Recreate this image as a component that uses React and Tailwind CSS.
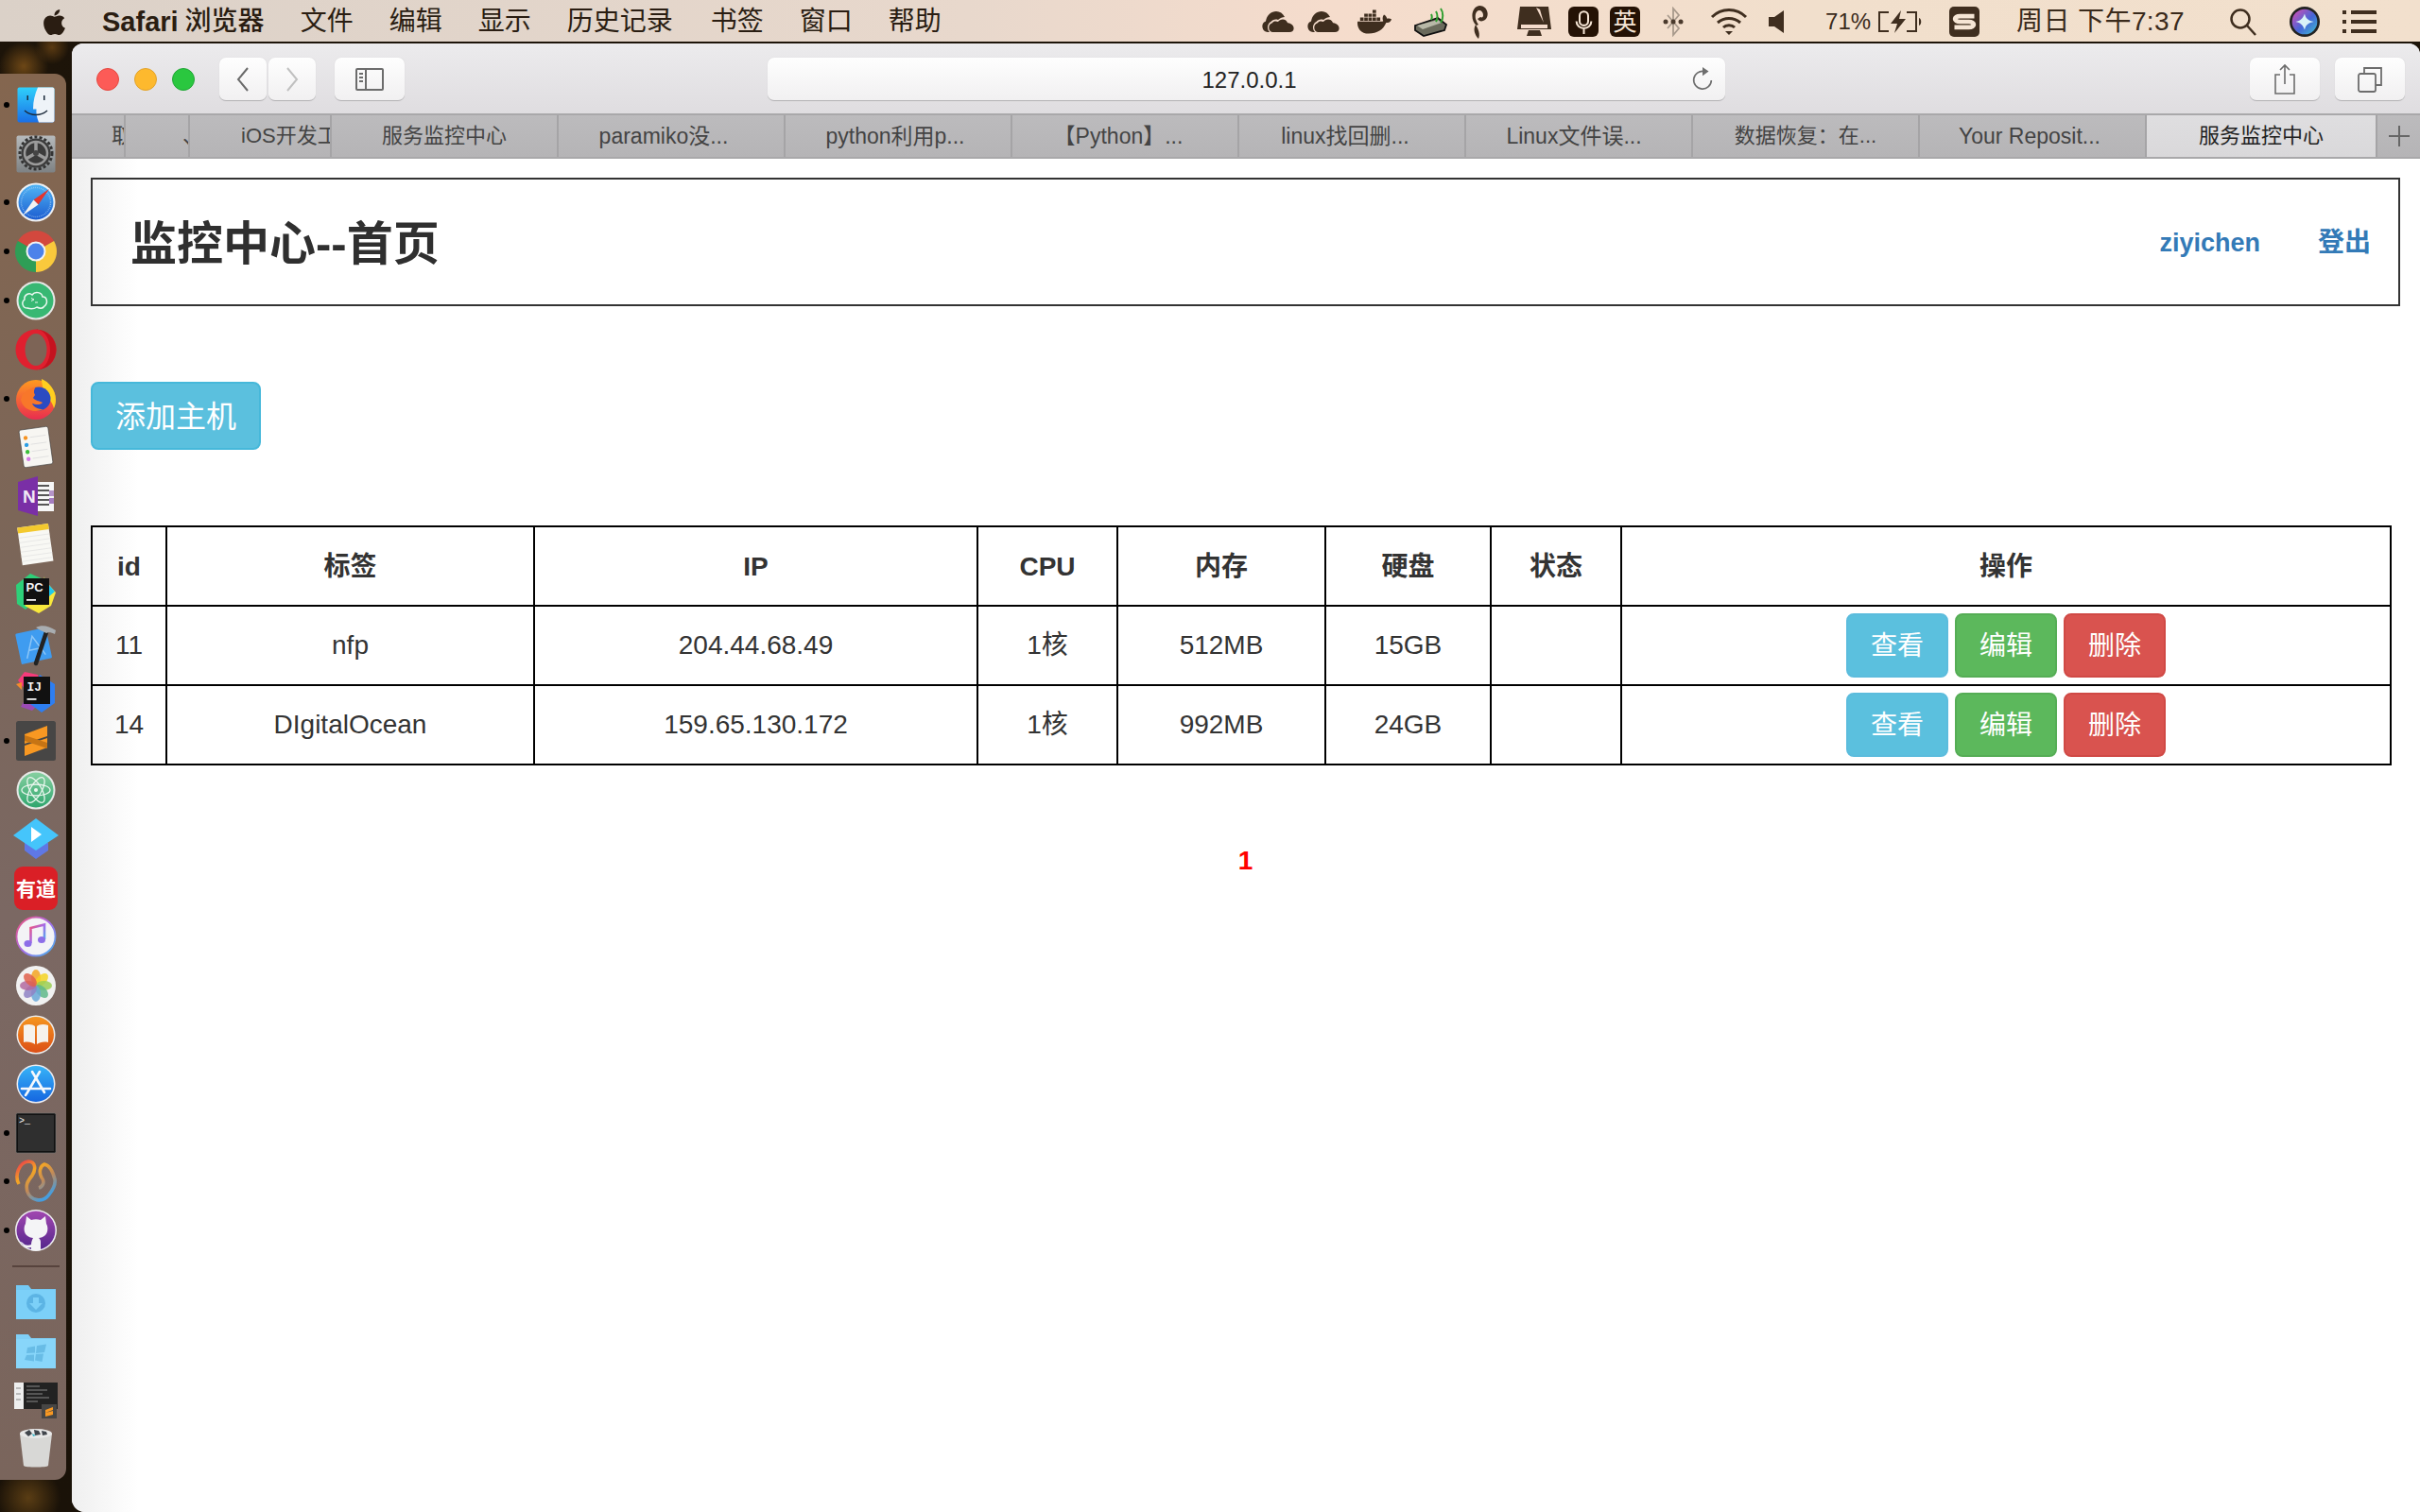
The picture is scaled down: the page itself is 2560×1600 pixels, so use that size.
import React from "react";
import { FaApple, FaDocker } from "react-icons/fa";

const Dock = ({ dot, children, cls = "h-[51.8px]" }) => (
  <div className={`relative flex w-[52px] items-center justify-center ${cls}`}>
    {dot && <span className="absolute left-[-8px] top-1/2 h-[6px] w-[6px] -translate-y-1/2 rounded-full bg-black" />}
    <svg viewBox="0 0 48 48" className="h-[48px] w-[48px]">{children}</svg>
  </div>
);

const G = ({ id, a, b }) => (
  <defs>
    <linearGradient id={id} x1="0" y1="0" x2="0" y2="1">
      <stop offset="0" stopColor={a} />
      <stop offset="1" stopColor={b} />
    </linearGradient>
  </defs>
);

function DockBar() {
  return (
    <aside className="mt-[34px] flex h-[1488px] w-[70px] flex-col rounded-r-[12px] bg-[linear-gradient(180deg,#84664f_0%,#7b6659_35%,#7b6863_60%,#7a655c_100%)] pl-[12px] pt-[7px]">
      <Dock dot>
        <G id="fa" a="#2fd0fb" b="#1a6fe6" />
        <rect x="4.5" y="5.5" width="39" height="37" rx="2" fill="url(#fa)" />
        <path d="M26 5.5H41.5a2 2 0 0 1 2 2v33a2 2 0 0 1-2 2H27c-2-5-3-10-2.500-14H21c0-9 2-16 5-23Z" fill="#eef3f8" />
        <rect x="14.500" y="14" width="1.500" height="5" fill="#1b2a3a" />
        <rect x="32" y="14" width="1.500" height="5" fill="#1b2a3a" />
        <path d="M12 30c7 6 17 6 24 0" stroke="#1b2a3a" strokeWidth="1.500" fill="none" />
      </Dock>
      <Dock>
        <G id="fb" a="#b6babc" b="#7e8284" />
        <rect x="3.500" y="4.500" width="41" height="39" rx="2" fill="url(#fb)" />
        <circle cx="24" cy="23" r="17" fill="none" stroke="#333" strokeWidth="3" strokeDasharray="3 2.200" />
        <circle cx="24" cy="23" r="15.500" fill="#3b3b3b" />
        <circle cx="24" cy="23" r="12" fill="none" stroke="#9b9b9b" strokeWidth="2.500" />
        <path d="M24 23V11M24 23 13.500 29M24 23 34.500 29" stroke="#9b9b9b" strokeWidth="3.500" />
        <circle cx="24" cy="23" r="3" fill="#444" />
      </Dock>
      <Dock dot>
        <G id="fc" a="#50b4f4" b="#1b5cd0" />
        <circle cx="24" cy="24" r="20.500" fill="#eef0f2" />
        <circle cx="24" cy="24" r="18.500" fill="url(#fc)" />
        <circle cx="24" cy="24" r="15.500" fill="none" stroke="#a8d0f4" strokeWidth="1.500" strokeDasharray="0.600 1.400" />
        <path d="M38 10 21.500 21.500l5 5Z" fill="#e5352c" />
        <path d="M10 38 21.500 21.500l5 5Z" fill="#f2f2f2" />
      </Dock>
      <Dock dot>
        <path d="M24 24 4.950 13A22 22 0 0 1 43.050 13Z" fill="#d3483e" />
        <path d="M24 24 43.050 13A22 22 0 0 1 24 46Z" fill="#f9c93c" />
        <path d="M24 24 24 46A22 22 0 0 1 4.950 13Z" fill="#2f9e56" />
        <circle cx="24" cy="24" r="10.500" fill="#f4f4f4" />
        <circle cx="24" cy="24" r="8.500" fill="#4c82ea" />
      </Dock>
      <Dock dot>
        <circle cx="24" cy="24" r="20.500" fill="#e6e8e6" />
        <circle cx="24" cy="24" r="18.500" fill="#38b873" />
        <path d="M15 32c-5 0-7-6-3-9-1-5 5-8 8-5 3-4 10-3 11 2 5 0 6 7 2 10-2 3-6 2-8 1-3 2-7 2-10 1Z" fill="none" stroke="#ecf8f1" strokeWidth="1.500" />
        <path d="M19 21.500l3 1.500-3 1.500M23 26h3" stroke="#ecf8f1" strokeWidth="1" fill="none" />
      </Dock>
      <Dock>
        <circle cx="24" cy="24" r="21.500" fill="#e0202f" />
        <path d="M24 2.500a21.500 21.500 0 0 1 0 43c9 0 15-10 15-21.500S33 2.500 24 2.500Z" fill="#c4131f" />
        <ellipse cx="24" cy="24" rx="11.500" ry="17" fill="#7d6456" />
      </Dock>
      <Dock dot>
        <G id="ff" a="#ff9a1f" b="#e92d4f" />
        <circle cx="24" cy="25" r="21" fill="url(#ff)" />
        <path d="M30 3c8 3 15 12 15 22 0 4-1 7-2 9-2-9-9-12-11-19-1-4-2-8-2-12Z" fill="#ffcf1f" />
        <circle cx="27" cy="24" r="12.500" fill="#2b4bc2" />
        <path d="M8 25c2 10 13 15 24 10-6 0-10-2-12-6 3 1 9 2 11-1-4-2-8-2-10-5l2-3c-2-3-1-6 1-9-6 2-10 4-12 7-2 1-3 3-4 7Z" fill="#f8772a" />
      </Dock>
      <Dock>
        <g transform="rotate(-8 24 24)">
          <rect x="8.500" y="4" width="31" height="40" rx="2" fill="#f7f6f2" stroke="#3a3a3a" strokeWidth="0.600" />
          <circle cx="14.500" cy="13" r="2.200" fill="#f59322" />
          <circle cx="14.500" cy="20.500" r="2.200" fill="#2a9ee5" />
          <circle cx="14.500" cy="28" r="2.200" fill="#3bbf3b" />
          <circle cx="14.500" cy="35.500" r="2.200" fill="#d47ae6" />
          <path d="M19 13h17M19 20.500h17M19 28h17M19 35.500h17" stroke="#ddd" strokeWidth="0.800" />
        </g>
      </Dock>
      <Dock>
        <rect x="26" y="9" width="17" height="31" fill="#f6f6f6" />
        <path d="M26 13h12M26 18h12M26 23h12M26 28h12M26 33h12" stroke="#222" strokeWidth="1.500" />
        <rect x="38" y="18" width="5" height="6" fill="#b594c8" />
        <rect x="38" y="26" width="5" height="6" fill="#a57dc0" />
        <path d="M5 9 26 3V45L5 39Z" fill="#7a2fa6" />
        <text x="10" y="31" fontSize="19" fontWeight="700" fill="#f2e8f6" fontFamily="Liberation Sans">N</text>
      </Dock>
      <Dock>
        <g transform="rotate(-8 24 24)">
          <rect x="7" y="3" width="33" height="40" fill="#f8f8f4" />
          <rect x="7" y="3" width="33" height="6" fill="#f3c92e" />
          <path d="M7 14h33M7 19h33M7 24h33M7 29h33M7 34h33M7 39h33" stroke="#ddd" strokeWidth="0.600" />
        </g>
      </Dock>
      <Dock>
        <path d="M3 14 18 2l14 6 3 12-22 20-9-6Z" fill="#2ed079" />
        <path d="M32 8l1-3 2 15Z" fill="#b9d34a" />
        <path d="M38 14l7 8-5 14L27 44 12 36Z" fill="#f8e83c" />
        <path d="M36 12l8 9-6 5Z" fill="#1ec8ee" />
        <rect x="11" y="7" width="27" height="28" fill="#111" />
        <text x="13.500" y="21" fontSize="13" fontWeight="700" fill="#f5f5f5" fontFamily="Liberation Sans">PC</text>
        <rect x="14" y="29" width="10" height="1.800" fill="#f5f5f5" />
      </Dock>
      <Dock>
        <g transform="rotate(-12 22 26)">
          <rect x="5" y="10" width="33" height="33" rx="1.500" fill="#3f9cf0" />
          <path d="M12 38 22 16l10 22M16 30h12" stroke="#8cc6f7" strokeWidth="1.500" fill="none" />
        </g>
        <path d="M36 9 24 45" stroke="#222" strokeWidth="4.500" strokeLinecap="round" />
        <path d="M24 7c6-3 13-2 21 3l-1 4c-4-2-7-2-9-1-3-2-7-3-11-6Z" fill="#a9adb0" />
      </Dock>
      <Dock>
        <path d="M5 12 12 3l14 3 4 16-14 4Z" fill="#f53b7a" />
        <path d="M9 22 3 16l6-2Z" fill="#f58b2c" />
        <path d="M16 26 8 40l12 4 8-8Z" fill="#9c4bb5" />
        <path d="M28 6l16 10v20L30 46 14 34Z" fill="#2e7ef0" />
        <rect x="11" y="8" width="28" height="29" fill="#111" />
        <text x="14.500" y="22.500" fontSize="13" fontWeight="700" fill="#f5f5f5" fontFamily="Liberation Mono">IJ</text>
        <rect x="14.500" y="31" width="10" height="1.800" fill="#f5f5f5" />
      </Dock>
      <Dock dot>
        <rect x="3" y="3" width="42" height="42" rx="2.500" fill="#474645" />
        <path d="M36 8v11L12 27V17Z" fill="#f89822" />
        <path d="M12 29 36 21v10L12 40Z" fill="#f89822" />
        <path d="M12 18l24 8v6l-24-8Z" fill="#c67414" />
      </Dock>
      <Dock>
        <G id="fg" a="#86cfa0" b="#2fa66e" />
        <circle cx="24" cy="24" r="20.500" fill="#e6e8e6" />
        <circle cx="24" cy="24" r="18.500" fill="url(#fg)" />
        <g fill="none" stroke="#eaf6ee" strokeWidth="1.300">
          <ellipse cx="24" cy="24" rx="15" ry="6" />
          <ellipse cx="24" cy="24" rx="15" ry="6" transform="rotate(60 24 24)" />
          <ellipse cx="24" cy="24" rx="15" ry="6" transform="rotate(120 24 24)" />
        </g>
        <circle cx="24" cy="24" r="2" fill="#eaf6ee" />
      </Dock>
      <Dock>
        <path d="M12 28v8l12 9 13-9v-8Z" fill="#5f78e5" />
        <path d="M24 2 48 20 24 36 0 20Z" fill="#45c5fb" />
        <path d="M19 11 30 19 19 27Z" fill="#fff" />
      </Dock>
      <Dock>
        <rect x="1" y="1" width="46" height="46" rx="9" fill="#da1f26" />
        <text x="24" y="32" textAnchor="middle" fontSize="21" fontWeight="700" fill="#fff" fontFamily="Noto Sans CJK SC">有道</text>
      </Dock>
      <Dock>
        <defs>
          <linearGradient id="fm" x1="0" y1="0" x2="1" y2="1">
            <stop offset="0" stopColor="#f0527a" />
            <stop offset="0.500" stopColor="#a66be8" />
            <stop offset="1" stopColor="#3fb8ef" />
          </linearGradient>
        </defs>
        <circle cx="24" cy="24" r="20.500" fill="#f3f3f6" stroke="url(#fm)" strokeWidth="1.800" />
        <path d="M18.500 31V15L33 11.500V27" stroke="url(#fm)" strokeWidth="2.600" fill="none" />
        <ellipse cx="15.500" cy="31.500" rx="4" ry="3.500" fill="#8d6ee8" />
        <ellipse cx="30" cy="27.500" rx="4" ry="3.500" fill="#8d6ee8" />
      </Dock>
      <Dock>
        <circle cx="24" cy="24" r="21" fill="#f1f1f1" />
        {[
          ["#f5a623", 0], ["#f5d423", 45], ["#9bcf53", 90], ["#5fb98a", 135],
          ["#6aa8d8", 180], ["#8f82c4", 225], ["#b36aa0", 270], ["#e0604c", 315],
        ].map(([c, r]) => (
          <ellipse key={r} cx="24" cy="15.500" rx="5" ry="8.500" fill={c} opacity="0.850" transform={`rotate(${r} 24 24)`} />
        ))}
      </Dock>
      <Dock>
        <G id="fo" a="#f5951f" b="#dc4f16" />
        <circle cx="24" cy="24" r="20.500" fill="#ececec" />
        <circle cx="24" cy="24" r="19" fill="url(#fo)" />
        <path d="M11 14c5-2 10-1 12 1v19c-3-2-7-3-12-2ZM37 14c-5-2-10-1-12 1v19c3-2 7-3 12-2Z" fill="#f6f2ec" />
      </Dock>
      <Dock>
        <G id="fp" a="#37b4f8" b="#1566e0" />
        <circle cx="24" cy="24" r="20.500" fill="#ececf0" />
        <circle cx="24" cy="24" r="19" fill="url(#fp)" />
        <path d="M28 11 15 33M20 11l13 22M9 29h30M15 33l-2 3" stroke="#f5f8fc" strokeWidth="2.600" strokeLinecap="round" fill="none" />
      </Dock>
      <Dock dot>
        <rect x="3" y="3" width="42" height="42" rx="1.500" fill="#111" stroke="#777" strokeWidth="0.600" />
        <rect x="5" y="5" width="38" height="38" fill="#2f2f2f" />
        <text x="6" y="14" fontSize="10" fill="#f4f4f4" fontFamily="Liberation Mono">&gt;_</text>
      </Dock>
      <Dock dot>
        <defs>
          <linearGradient id="fn" x1="0" y1="0" x2="0.700" y2="1">
            <stop offset="0" stopColor="#e8344f" />
            <stop offset="0.350" stopColor="#f6a623" />
            <stop offset="0.650" stopColor="#c08a5a" />
            <stop offset="1" stopColor="#3f9fe6" />
          </linearGradient>
        </defs>
        <path d="M6 27C1 18 6 4 16 3c8 0 8 9 4 15-5 6-7 10-5 17 3 9 16 13 23 3 4-5 7-10 6-16-2-8-6-15-11-16-5 2-6 9-3 14 4 5 1 10-3 11" fill="none" stroke="url(#fn)" strokeWidth="3.600" />
      </Dock>
      <Dock dot>
        <G id="fq" a="#a147b0" b="#55278c" />
        <circle cx="24" cy="24" r="22" fill="#efeff2" />
        <circle cx="24" cy="24" r="20.500" fill="url(#fq)" />
        <path d="M14 9l5 4c3-1 7-1 10 0l5-4 1 8c2 3 2 9-1 12-2 2-5 3-7 3 1 1 2 2 2 4v9a21 21 0 0 1-10 0v-3c-4 1-7 0-8-2-1-2-3-3-4-4 2 0 3 1 5 3 2 1 5 1 7 0 0-3 1-5 2-7-2 0-5-1-7-3-3-3-3-9-1-12Z" fill="#f4f4f6" />
      </Dock>
      <div className="flex h-[23px] w-[52px] items-center justify-center">
        <div className="h-[2px] w-[50px] bg-[#57433d]" />
      </div>
      <Dock>
        <path d="M3 7h13l3 4h26v32H3Z" fill="#74c9f4" />
        <rect x="3" y="12" width="42" height="31" fill="#7cd0f8" />
        <circle cx="24" cy="26" r="10" fill="#5cb4e4" />
        <path d="M21 20h6v6h4l-7 7-7-7h4Z" fill="#7cd0f8" />
      </Dock>
      <Dock>
        <path d="M3 7h13l3 4h26v32H3Z" fill="#80cff6" />
        <rect x="3" y="12" width="42" height="31" fill="#88d6fa" />
        <path d="M15 21l8-1.500v7l-9 .5ZM25 19l10-1.500-2 8.500-9 1ZM14 29l8-.5v7L12 34ZM24 28l8-.5-1.500 8.500-7.500-1.500Z" fill="#68bce6" />
      </Dock>
      <Dock>
        <rect x="1" y="6" width="46" height="28" fill="#eee" />
        <rect x="11" y="6" width="36" height="28" fill="#222" />
        <path d="M14 10h14M14 14h22M14 18h17M14 22h24M14 26h12M3 12h5M3 18h5M3 24h5" stroke="#888" strokeWidth="1" />
        <rect x="30" y="29" width="16" height="15" fill="#474645" />
        <path d="M42 32v3l-8 3v-3ZM34 38l8-2v4l-8 2Z" fill="#f89822" />
      </Dock>
      <Dock>
        <path d="M7 9h34l-4 34c-1 2-25 2-26 0Z" fill="#d8d8d6" />
        <ellipse cx="24" cy="9" rx="17" ry="5" fill="#e8e8e8" />
        <path d="M12 8l5-3 3 4-4 3ZM22 5l5 1 2 4-6 1ZM30 6l5 1 1 3-5 1Z" fill="#40454c" />
        <path d="M20 9l4 2-3 1Z" fill="#38b5c7" />
      </Dock>
    </aside>
  );
}

const Cloud = () => (
  <svg viewBox="0 0 36 24" className="h-[24px] w-[36px]" fill="#3f2e1f">
    <path d="M7 23a6 6 0 0 1-2-11.500C6 5 11 1 16 1c4 0 7 2 9 6-2 0-5 1-7 3-3-1-6 0-7.500 2C8 13 7 16 7 18c0 2 1 4 2 5Z" />
    <path d="M12 23a5 5 0 0 1-.5-9.500C13 11 16 11 18 12c2-3 8-4 10 1 0 .5 1 0 3 1 5 2 5 9-1 9Z" />
  </svg>
);

function Status() {
  return (
    <div className="flex items-center text-[#3a2a1b]">
      <Cloud />
      <span className="ml-[12px] flex"><Cloud /></span>
      <FaDocker className="ml-[18px] text-[36px] text-[#3f2e1f]" />
      <svg viewBox="0 0 36 32" className="ml-[24px] h-[32px] w-[36px]">
        <path d="M1 20 25 12l9 7-2 6-22 6-9-6Z" fill="#6a6a5c" stroke="#111" strokeWidth="1.800" />
        <path d="M3 20l22-6 4 3-20 7Z" fill="#b8b8a8" />
        <path d="M18 8c1 2 1 4 0 6M23 5c2 3 2 8 0 11M28 2c3 4 3 11 0 15" stroke="#2f9e2f" strokeWidth="2" fill="none" />
      </svg>
      <svg viewBox="0 0 18 36" className="ml-[24px] h-[36px] w-[18px]" fill="#3f2e1f">
        <path d="M6 22C-1 17 0 2 9 1c9 0 11 11 6 15-3 2-6 2-8-1l3-2c2 1 3 0 3-2 0-3-2-5-4-5-3 0-5 4-4 9 1 3 2 5 3 6Z" />
        <path d="M5 21c-3 5-1 11 3 15 2-5 0-10-3-15Z" />
      </svg>
      <svg viewBox="0 0 36 34" className="ml-[31px] h-[34px] w-[36px]" fill="#3f2e1f">
        <path d="M3 1h30l3 24H0Z" />
        <path d="M4 20h28v4H4Z" fill="#f5dccc" />
        <path d="M20 2l8 16-4-14Z" fill="#f5dccc" />
        <path d="M12 26h12l2 6H10Z" />
      </svg>
      <span className="ml-[18px] flex h-[32px] w-[32px] items-center justify-center rounded-[6px] bg-[#241205]">
        <svg viewBox="0 0 24 24" className="h-[27px] w-[27px]" fill="none" stroke="#f5e5d5" strokeWidth="1.800">
          <rect x="8" y="2" width="8" height="13" rx="4" />
          <path d="M5 11c0 9 14 9 14 0M12 18v5" />
        </svg>
      </span>
      <span className="ml-[12px] flex h-[32px] w-[32px] items-center justify-center rounded-[6px] bg-[#241205] text-[25px] leading-none text-[#f5e5d5]">英</span>
      <svg viewBox="0 0 22 32" className="ml-[24px] h-[32px] w-[22px]" fill="none" stroke="#a89a8c" strokeWidth="1.800">
        <path d="M5 9l12 14-6 7V2l6 7L5 23" />
        <circle cx="3" cy="16" r="2.500" fill="#4a3a2c" stroke="none" />
        <circle cx="11" cy="16" r="2.500" fill="#4a3a2c" stroke="none" />
        <circle cx="19" cy="16" r="2.500" fill="#4a3a2c" stroke="none" />
      </svg>
      <svg viewBox="0 0 40 30" className="ml-[28px] h-[30px] w-[40px]" fill="none" stroke="#3f2e1f" strokeWidth="3">
        <path d="M2 10c10-10 26-10 36 0M8 16c7-6 17-6 24 0M14 21c3-3 9-3 12 0" />
        <path d="M20 29l-4-4h8Z" fill="#3f2e1f" stroke="none" />
      </svg>
      <svg viewBox="0 0 16 24" className="ml-[22px] h-[24px] w-[16px]" fill="#3f2e1f">
        <path d="M0 7h6l10-7v24L6 17H0Z" />
      </svg>
      <span className="ml-[44px] text-[24px] leading-none">71%</span>
      <svg viewBox="0 0 46 24" className="ml-[8px] h-[24px] w-[46px]" fill="none" stroke="#3f2e1f" strokeWidth="2">
        <path d="M11 2H1v20h10M30 2h10v20H30" />
        <path d="M24 0 13 14h7l-3 10 12-15h-7Z" fill="#3f2e1f" stroke="none" />
        <path d="M43 8c3 1 3 7 0 8Z" fill="#3f2e1f" stroke="none" />
      </svg>
      <span className="ml-[29px] flex h-[32px] w-[32px] items-center justify-center rounded-[5px] bg-[#3f2e1f]">
        <svg viewBox="0 0 24 24" className="h-[28px] w-[28px]" fill="none" stroke="#f5e5d5" strokeWidth="4">
          <path d="M21 7H8c-6 0-6 5 0 5h8c6 0 6 5 0 5H3" />
        </svg>
      </span>
      <span className="ml-[39px] whitespace-nowrap text-[28px] leading-none tracking-[0.4px]">周日 下午7:37</span>
      <svg viewBox="0 0 30 30" className="ml-[47px] h-[30px] w-[30px]" fill="none" stroke="#3f2e1f" strokeWidth="2.500">
        <circle cx="12" cy="12" r="9.500" />
        <path d="M19 19l9 10" />
      </svg>
      <svg viewBox="0 0 30 30" className="ml-[34px] h-[32px] w-[32px]">
        <defs>
          <linearGradient id="sr" x1="0" y1="0" x2="1" y2="1">
            <stop offset="0" stopColor="#e14bb0" />
            <stop offset="0.550" stopColor="#4466d8" />
            <stop offset="1" stopColor="#3fc1d0" />
          </linearGradient>
        </defs>
        <circle cx="15" cy="15" r="15" fill="#222" />
        <circle cx="15" cy="15" r="12.500" fill="url(#sr)" />
        <path d="M6 15c5-1 7-3 9-8 1 5 4 7 9 8-5 1-8 3-9 8-2-5-4-7-9-8Z" fill="#d8f2f8" />
      </svg>
      <svg viewBox="0 0 36 30" className="ml-[24px] h-[30px] w-[36px]" fill="#3f2e1f">
        <path d="M0 3h4v4H0ZM9 3h27v4H9ZM0 13h4v4H0ZM9 13h27v4H9ZM0 23h4v4H0ZM9 23h27v4H9Z" />
      </svg>
    </div>
  );
}

const tabs = [
  ["w-[57px] pl-[42px]", "取"],
  ["w-[68px] pl-[60px]", "、"],
  ["w-[150px] pl-[54px]", "iOS开发工具"],
  ["w-[240px] justify-center", "服务监控中心"],
  ["w-[240px] justify-center pr-[16px] text-[23px]", "paramiko没..."],
  ["w-[240px] justify-center pr-[6px] text-[23px]", "python利用p..."],
  ["w-[240px] justify-center pr-[14px] text-[23px]", "【Python】..."],
  ["w-[240px] justify-center pr-[14px] text-[23px]", "linux找回删..."],
  ["w-[240px] justify-center pr-[10px] text-[23px]", "Linux文件误..."],
  ["w-[240px] justify-center", "数据恢复：在..."],
  ["w-[240px] justify-center pr-[6px] text-[23px]", "Your Reposit..."],
];

const ToolBtn = ({ cls, children }) => (
  <div className={`flex h-[46px] items-center justify-center rounded-[7px] border-b border-b-[#b5b4b6] bg-[linear-gradient(180deg,#fefefe,#f1f0f1)] shadow-[0_0_1px_#c8c8c8] ${cls}`}>
    {children}
  </div>
);

const ActBtn = ({ cls, children }) => (
  <button className={`h-[68px] w-[108px] rounded-[8px] border-2 pt-[2px] text-[28px] text-white ${cls}`}>{children}</button>
);

const rows = [
  ["11", "nfp", "204.44.68.49", "1核", "512MB", "15GB"],
  ["14", "DIgitalOcean", "159.65.130.172", "1核", "992MB", "24GB"],
];

const cell = "border-2 border-black text-center align-middle";

export default function App() {
  return (
    <div className="flex h-[1600px] w-[2560px] flex-col overflow-hidden bg-[radial-gradient(circle_at_25px_70px,#6d4716_0,transparent_26px),radial-gradient(circle_at_55px_50px,#5a3a12_0,transparent_18px),radial-gradient(circle_at_30px_1585px,#5a3d14_0,transparent_34px),linear-gradient(180deg,#1d1409,#1a1208)] text-[#333] [font-family:'Liberation_Sans','Noto_Sans_CJK_SC',sans-serif]">
      <header className="flex h-[44px] shrink-0 items-center justify-between bg-[linear-gradient(90deg,#dbd1c8_0%,#e8d8cc_40%,#f5dccc_55%,#f1dfcc_75%,#f2e0cd_100%)] pl-[42px] pr-[46px] pt-[2px]">
        <div className="flex items-center text-[28px] leading-none text-[#2a1d12]">
          <FaApple className="text-[31px]" />
          <span className="ml-[35px] text-[29px] font-bold">Safari</span>
          <span className="ml-[7px] font-medium">浏览器</span>
          <span className="ml-[38px]">文件</span>
          <span className="ml-[38px]">编辑</span>
          <span className="ml-[38px]">显示</span>
          <span className="ml-[38px]">历史记录</span>
          <span className="ml-[40px]">书签</span>
          <span className="ml-[38px]">窗口</span>
          <span className="ml-[38px]">帮助</span>
        </div>
        <Status />
      </header>
      <div className="flex min-h-0 flex-1">
        <div className="w-[76px] shrink-0">
          <DockBar />
        </div>
        <main className="mt-[2px] flex min-w-0 flex-1 flex-col overflow-hidden rounded-t-[12px] rounded-bl-[14px] bg-white">
          <div className="flex h-[74px] shrink-0 items-center bg-[linear-gradient(180deg,#ecebed,#dfdde0)] pl-[26px] pt-[2px]">
            <div className="flex gap-4">
              <span className="h-[24px] w-[24px] rounded-full border border-[#e5483f] bg-[#fc5b57]" />
              <span className="h-[24px] w-[24px] rounded-full border border-[#e2a32c] bg-[#fdb92e]" />
              <span className="h-[24px] w-[24px] rounded-full border border-[#22a637] bg-[#2ac73f]" />
            </div>
            <ToolBtn cls="ml-[26px] w-[50px]">
              <svg viewBox="0 0 14 28" className="h-[28px] w-[14px]" fill="none" stroke="#6a6a6a" strokeWidth="2"><path d="M12 2 2 14l10 12" /></svg>
            </ToolBtn>
            <ToolBtn cls="ml-[2px] w-[50px] bg-[linear-gradient(180deg,#f8f8f8,#ececec)]">
              <svg viewBox="0 0 14 28" className="h-[28px] w-[14px]" fill="none" stroke="#c0c0c0" strokeWidth="2"><path d="M2 2l10 12L2 26" /></svg>
            </ToolBtn>
            <ToolBtn cls="ml-[20px] w-[74px]">
              <svg viewBox="0 0 30 24" className="h-[24px] w-[30px]" fill="none" stroke="#6c6c6c" strokeWidth="2">
                <rect x="1" y="1" width="28" height="22" rx="1" />
                <path d="M11 1v22M4 6h4M4 10h4M4 14h4" />
              </svg>
            </ToolBtn>
            <ToolBtn cls="relative ml-[384px] w-[1013px] pl-[6px] pt-[3px] text-[24px] text-[#222]">
              <span>127.0.0.1</span>
              <svg viewBox="0 0 24 30" className="absolute right-[12px] top-[9px] h-[28px] w-[24px]" fill="none" stroke="#6e6e6e" strokeWidth="1.800">
                <path d="M14 6a10 10 0 1 0 8 10" />
                <path d="M12 1l7 5-7 5Z" fill="#6e6e6e" stroke="none" />
              </svg>
            </ToolBtn>
            <ToolBtn cls="ml-[555px] w-[74px]">
              <svg viewBox="0 0 24 34" className="h-[34px] w-[24px]" fill="none" stroke="#6c6c6c" strokeWidth="1.600">
                <path d="M7 12H2v20h20V12h-5M12 22V2M7 7l5-5 5 5" />
              </svg>
            </ToolBtn>
            <ToolBtn cls="ml-[16px] w-[74px]">
              <svg viewBox="0 0 28 28" className="h-[28px] w-[28px]" fill="none" stroke="#6c6c6c" strokeWidth="1.800">
                <rect x="2" y="8" width="18" height="19" rx="2" />
                <path d="M8 8V2h18v18h-6" />
              </svg>
            </ToolBtn>
          </div>
          <nav className="flex h-[48px] shrink-0 border-y-2 border-y-[#a9a8aa] text-[22px] leading-none text-[#444]">
            {tabs.map(([c, t], i) => (
              <div key={i} className={`flex shrink-0 items-center overflow-hidden whitespace-nowrap border-r-2 border-r-[#a5a4a6] bg-[linear-gradient(180deg,#bcbbbd,#b5b4b6)] ${c}`}>
                {t}
              </div>
            ))}
            <div className="flex w-[242px] shrink-0 items-center justify-center bg-[linear-gradient(180deg,#dfdee0,#d9d8da)] text-[#222]">
              服务监控中心
            </div>
            <div className="flex flex-1 items-center justify-center border-l-2 border-l-[#a5a4a6] bg-[linear-gradient(180deg,#bcbbbd,#b5b4b6)]">
              <svg viewBox="0 0 22 22" className="h-[22px] w-[22px]" stroke="#666" strokeWidth="2"><path d="M11 0v22M0 11h22" /></svg>
            </div>
          </nav>
          <section className="min-h-0 flex-1 bg-[linear-gradient(90deg,#efefef,#ffffff_70px)] pl-[20px] pr-[21px] pt-[20px]">
            <div className="flex h-[136px] items-center justify-between border-2 border-[#333] pl-[40px] pr-[29px]">
              <h1 className="pt-[4px] text-[49px] font-bold leading-none text-[#2f2f2f]">监控中心--首页</h1>
              <div className="flex items-center gap-[61px] pt-[2px] text-[28px] font-bold text-[#337ab7]">
                <span className="text-[27px]">ziyichen</span>
                <span>登出</span>
              </div>
            </div>
            <button className="mt-[80px] block h-[72px] w-[180px] rounded-[8px] border-2 border-[#46b8da] bg-[#5bc0de] pt-[2px] text-[32px] text-white">
              添加主机
            </button>
            <table className="mt-[80px] w-[2432px] table-fixed border-collapse text-[28px] text-[#333]">
              <colgroup>
                <col className="w-[79px]" />
                <col className="w-[389px]" />
                <col className="w-[469px]" />
                <col className="w-[148px]" />
                <col className="w-[220px]" />
                <col className="w-[175px]" />
                <col className="w-[138px]" />
                <col className="w-[814px]" />
              </colgroup>
              <thead>
                <tr className="h-[84px]">
                  {["id", "标签", "IP", "CPU", "内存", "硬盘", "状态", "操作"].map((h) => (
                    <th key={h} className={`${cell} pt-[2px] font-bold`}>{h}</th>
                  ))}
                </tr>
              </thead>
              <tbody>
                {rows.map((r) => (
                  <tr key={r[0]} className="h-[84px]">
                    {r.map((v, i) => (
                      <td key={i} className={cell}>{v}</td>
                    ))}
                    <td className={cell} />
                    <td className={cell}>
                      <div className="flex items-center justify-center gap-[7px]">
                        <ActBtn cls="border-[#5bbcdd] bg-[#5bc0de]">查看</ActBtn>
                        <ActBtn cls="border-[#55ad55] bg-[#5cb85c]">编辑</ActBtn>
                        <ActBtn cls="border-[#d04945] bg-[#d9534f]">删除</ActBtn>
                      </div>
                    </td>
                  </tr>
                ))}
              </tbody>
            </table>
            <p className="mt-[81px] text-center text-[28px] font-bold leading-[40px] text-[#ff0000]">1</p>
          </section>
        </main>
      </div>
    </div>
  );
}
